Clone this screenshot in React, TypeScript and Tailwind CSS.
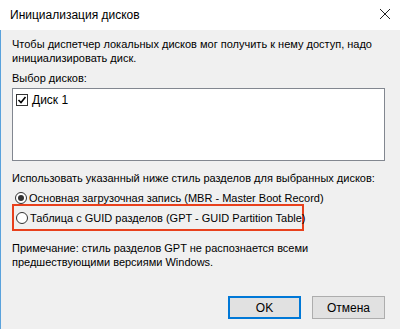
import React from 'react';

function Radio({ checked }: { checked?: boolean }) {
  return (
    <span className="w-[12px] h-[12px] rounded-full border border-[#333] bg-white flex items-center justify-center shrink-0">
      {checked && <span className="w-[6px] h-[6px] rounded-full bg-[#333]" />}
    </span>
  );
}

export default function App() {
  return (
    <div
      className="w-[400px] h-[329px] flex flex-col text-[11px] leading-[14px] text-black whitespace-nowrap"
      style={{ fontFamily: '"Liberation Sans", Arial, sans-serif' }}
    >
      <div className="h-[30px] bg-white flex items-center justify-between pl-[10px] pr-[9px] shrink-0">
        <span className="text-[12px]">Инициализация дисков</span>
        <svg width="12" height="12" viewBox="0 0 12 12" className="mb-[2px]">
          <path d="M1 1 L11 11 M11 1 L1 11" stroke="#222" strokeWidth="1" />
        </svg>
      </div>

      <div className="flex-1 bg-[#f0f0f0] border-l border-[#5aa2dc] pl-[11px] pr-[15px] pt-[7px] flex flex-col">
        <p>
          Чтобы диспетчер локальных дисков мог получить к нему доступ, надо
          <br />
          инициализировать диск.
        </p>

        <p className="mt-[6px]">Выбор дисков:</p>

        <div className="mt-[3px] h-[73px] bg-white border border-[#828790] pl-[3px] pt-[4px]">
          <label className="flex items-center gap-[4px]">
            <span className="w-[12px] h-[12px] border border-[#333] bg-white flex items-center justify-center">
              <svg width="10" height="10" viewBox="0 0 10 10">
                <path d="M1.5 5 L4 7.5 L8.5 2" fill="none" stroke="#000" strokeWidth="1.6" />
              </svg>
            </span>
            <span className="text-[12px]">Диск 1</span>
          </label>
        </div>

        <p className="mt-[10px]">Использовать указанный ниже стиль разделов для выбранных дисков:</p>

        <div className="mt-[6px] h-[13px] pl-[3px] flex items-center gap-[2px]">
          <Radio checked />
          <span>Основная загрузочная запись (MBR - Master Boot Record)</span>
        </div>

        <div className="w-[292px] h-[27px] border-[2px] border-[#e8401c] pl-[2px] flex items-center gap-[2px]">
          <Radio />
          <span>Таблица с GUID разделов (GPT - GUID Partition Table)</span>
        </div>

        <p className="mt-[10px]">
          Примечание: стиль разделов GPT не распознается всеми
          <br />
          предшествующими версиями Windows.
        </p>

        <div className="mt-auto mb-[10px] flex justify-end gap-[11px]">
          <button className="w-[73px] h-[23px] bg-[#e1e1e1] border-[2px] border-[#0078d7] text-[12px]">
            OK
          </button>
          <button className="w-[73px] h-[23px] bg-[#e1e1e1] border border-[#adadad] text-[12px]">
            Отмена
          </button>
        </div>
      </div>
    </div>
  );
}
